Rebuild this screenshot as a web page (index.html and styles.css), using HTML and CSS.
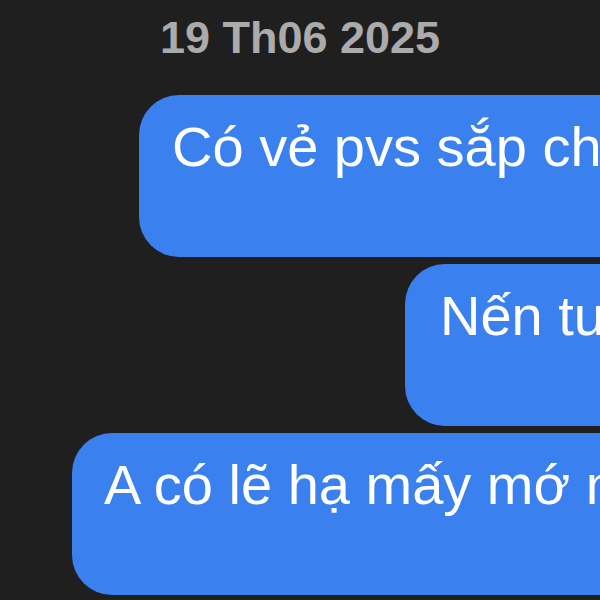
FILE: index.html
```html
<!DOCTYPE html>
<html lang="vi">
<head>
    <meta charset="UTF-8">
    <meta name="viewport" content="width=device-width, initial-scale=1.0">
    <title>Tin nhắn</title>
    <link rel="stylesheet" href="styles.css">
</head>
<body>

    <div class="chat">
        <div class="date-label">19 Th06 2025</div>
        <div class="messages">
            <div class="bubble sent first">Có vẻ pvs sắp chạy rồi</div>
            <div class="bubble sent second">Nến tuần đẹp</div>
            <div class="bubble sent third">A có lẽ hạ mấy mớ mã kia</div>
        </div>
    </div>

</body>
</html>
```

FILE: styles.css
```css
body {
    font-family: "Liberation Sans", Arial, sans-serif;
    background-color: #1f1f1f;
    margin: 0;
    overflow: hidden;
}
.chat {
    width: 600px;
    height: 600px;
    overflow: hidden;
    padding-top: 11px;
    box-sizing: border-box;
}
.date-label {
    width: 600px;
    text-align: center;
    color: #ababab;
    font-size: 45px;
    font-weight: bold;
    line-height: 1.2;
    padding-left: 0;
}
.messages {
    display: flex;
    flex-direction: column;
    gap: 7px;
    margin-top: 30px;
}
.bubble {
    background-color: #3a80ef;
    color: #ffffff;
    font-size: 56px;
    line-height: 67px;
    height: 162px;
    box-sizing: border-box;
    padding: 18px 40px 0 33px;
    border-radius: 40px;
    white-space: nowrap;
    width: max-content;
}
.bubble.first {
    margin-left: 139px;
}
.bubble.second {
    margin-left: 405px;
    padding-left: 35px;
}
.bubble.third {
    margin-left: 72px;
    padding-left: 32px;
}
```
